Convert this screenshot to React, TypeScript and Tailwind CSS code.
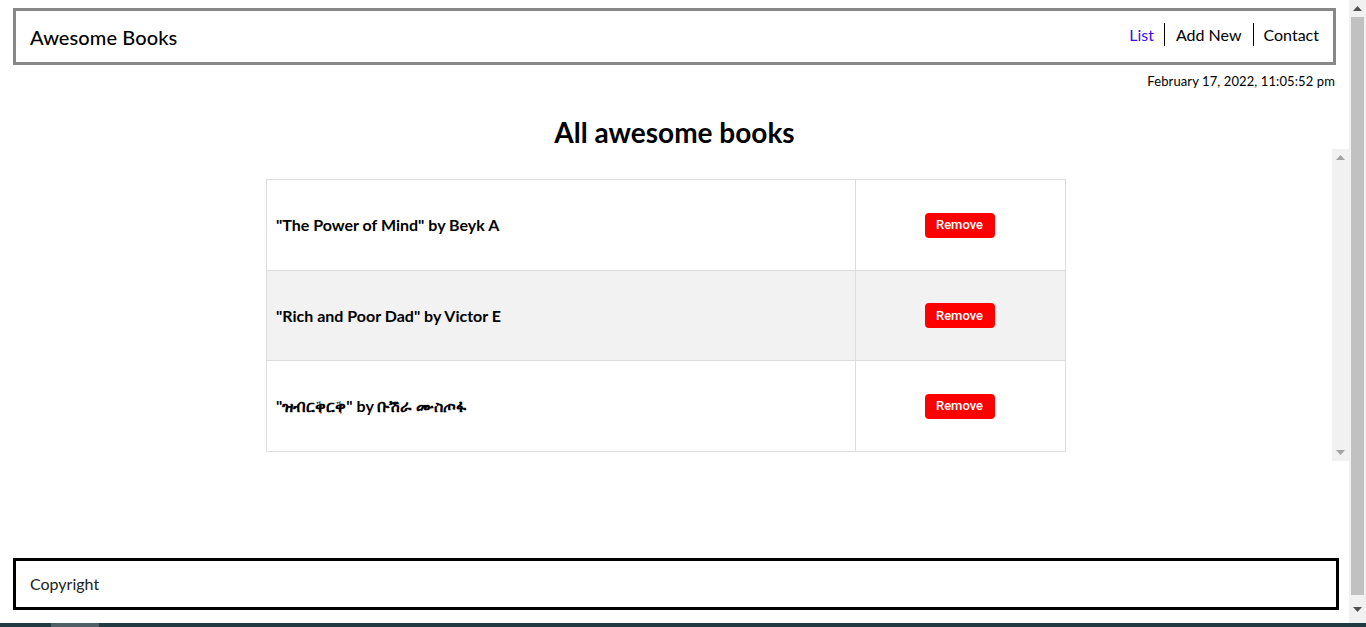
import React from "react";

const books = [
  { title: "The Power of Mind", author: "Beyk A" },
  { title: "Rich and Poor Dad", author: "Victor E" },
  { title: "ዝብርቅርቅ", author: "ቡሽራ ሙስጦፋ" },
];

const rowHeights = ["h-[91px]", "h-[90px]", "h-[91px]"];

const ArrowUp = ({ color }: { color: string }) => (
  <svg width="9" height="5" viewBox="0 0 9 5">
    <polygon points="0,5 9,5 4.5,0" fill={color} />
  </svg>
);

const ArrowDown = ({ color }: { color: string }) => (
  <svg width="9" height="5" viewBox="0 0 9 5">
    <polygon points="0,0 9,0 4.5,5" fill={color} />
  </svg>
);

export default function App() {
  return (
    <div className="flex h-[627px] w-[1366px] flex-col overflow-hidden bg-white font-['Lato','Noto_Sans',sans-serif] text-black">
      <div className="flex h-[623px]">
        <div className="flex w-[1349px] flex-col">
          <header className="ml-[13px] mr-[13px] mt-[8px] flex h-[57px] items-center justify-between border-[3px] border-[#888888] pl-[14px] pr-[14px]">
            <h1 className="text-[20px] font-medium tracking-[0.1px]">Awesome Books</h1>
            <nav className="mb-[4px] flex items-center text-[16px]">
              <a className="border-r border-black pr-[10px] leading-[23px] text-[#3a10e5]">List</a>
              <a className="border-r border-black px-[11px] leading-[23px]">Add New</a>
              <a className="pl-[10px] leading-[23px]">Contact</a>
            </nav>
          </header>

          <p className="mr-[14px] mt-[8px] text-right text-[13px] leading-[16px] tracking-[0.1px]">
            February 17, 2022, 11:05:52 pm
          </p>

          <h2 className="mt-[26px] text-center text-[28px] font-bold leading-[34px]">
            All awesome books
          </h2>

          <div className="flex h-[312px]">
            <div className="flex-1 pt-[30px]">
              <div className="mx-auto w-[800px] border-l border-t border-[#dddddd]">
                {books.map((b, i) => (
                  <div
                    key={i}
                    className={`flex ${rowHeights[i]} border-b border-[#dddddd] ${i === 1 ? "bg-[#f2f2f2]" : "bg-white"}`}
                  >
                    <div className="flex w-[589px] items-center border-r border-[#dddddd] pl-[9px] text-[16px] font-bold">
                      "{b.title}" by {b.author}
                    </div>
                    <div className="flex flex-1 items-center justify-center border-r border-[#dddddd]">
                      <button className="-ml-[2px] h-[25px] w-[70px] rounded-[4px] bg-[#ff0000] font-['Roboto','Liberation_Sans',sans-serif] text-[13px] font-medium text-white">
                        Remove
                      </button>
                    </div>
                  </div>
                ))}
              </div>
            </div>
            <div className="flex w-[17px] flex-col items-center justify-between bg-[#f1f1f1] py-[6px]">
              <ArrowUp color="#a3a3a3" />
              <ArrowDown color="#a3a3a3" />
            </div>
          </div>

          <footer className="ml-[13px] mr-[10px] mt-[97px] flex h-[52px] items-center border-[3px] border-black pl-[14px] text-[16px] text-[#222222]">
            Copyright
          </footer>
        </div>

        <div className="flex w-[17px] flex-col items-center bg-[#f1f1f1]">
          <div className="flex h-[17px] items-center justify-center">
            <ArrowUp color="#505050" />
          </div>
          <div className="h-[578px] w-[13px] bg-[#c1c1c1]" />
          <div className="flex flex-1 items-center justify-center">
            <ArrowDown color="#505050" />
          </div>
        </div>
      </div>

      <div className="flex h-[4px] bg-[#213940]">
        <div className="ml-[51px] w-[48px] bg-[#4f5f66]" />
      </div>
    </div>
  );
}
